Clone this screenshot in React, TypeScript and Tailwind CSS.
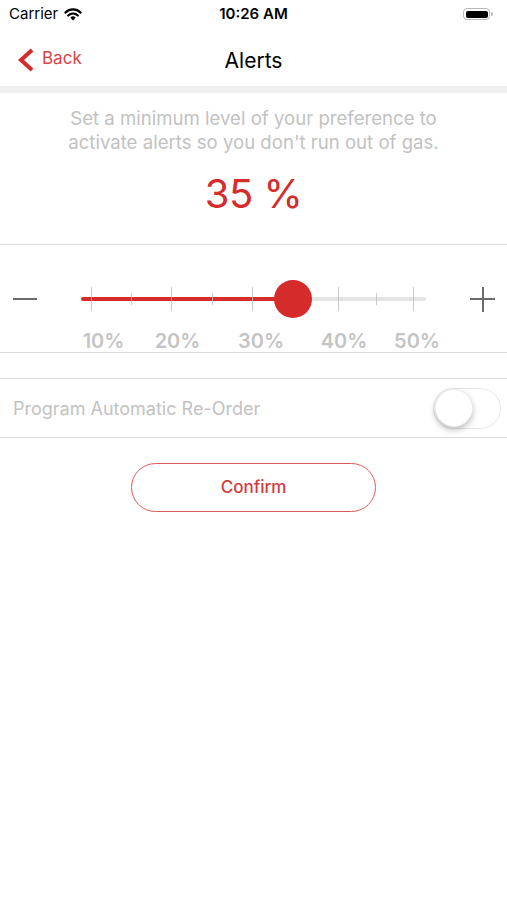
import React from "react";

export default function App() {
  const majorTicks = [9.7, 89.7, 170.7, 257, 332];
  const minorTicks = [50, 130.7, 294.7];
  return (
    <div
      className="w-[507px] h-[900px] bg-white flex flex-col"
      style={{ fontFamily: "Inter, 'Noto Sans', sans-serif" }}
    >
      {/* Status bar */}
      <div className="h-[28px] grid grid-cols-3 items-center px-[9px]">
        <div className="flex items-center gap-[6px] text-[15px] text-black">
          <span>Carrier</span>
          <svg width="18" height="13" viewBox="0 0 18 13">
            <path d="M9 12.5 L6.3 9.6 A4 4 0 0 1 11.7 9.6 Z" fill="#000" />
            <path d="M4.2 7.5 A6.8 6.8 0 0 1 13.8 7.5" stroke="#000" strokeWidth="2.2" fill="none" strokeLinecap="round" />
            <path d="M1.4 4.6 A10.8 10.8 0 0 1 16.6 4.6" stroke="#000" strokeWidth="2.2" fill="none" strokeLinecap="round" />
          </svg>
        </div>
        <div className="text-center text-[15px] font-semibold text-black">10:26 AM</div>
        <div className="flex justify-end items-center pr-[5px]">
          <div className="w-[27px] h-[12px] rounded-[4px] border border-[#b8b8b8] p-[1.5px]">
            <div className="w-full h-full bg-black rounded-[2px]" />
          </div>
          <div className="w-[2px] h-[4px] bg-[#b8b8b8] rounded-r-sm ml-[1px]" />
        </div>
      </div>

      {/* Nav bar */}
      <div className="h-[58px] relative flex items-center justify-center pt-[7px]">
        <div className="absolute left-[17px] top-[18px] flex items-center gap-[6px]">
          <svg width="19" height="24" viewBox="0 0 19 24">
            <path d="M15 2 L4 12 L15 22" stroke="#d62b2b" strokeWidth="4" fill="none" strokeLinejoin="miter" />
          </svg>
          <span className="text-[17px] text-[#d94545] pb-[2px]">Back</span>
        </div>
        <span className="text-[21px] text-black">Alerts</span>
      </div>
      <div className="h-[7px] bg-[#efefef]" />

      {/* Description */}
      <div className="flex flex-col items-center pt-[13px] pb-[26px] border-b border-[#dcdcdc]">
        <p className="text-[18.6px] leading-[24px] text-[#c2c2c2] text-center">
          Set a minimum level of your preference to
          <br />
          activate alerts so you don't run out of gas.
        </p>
        <div className="mt-[16px] text-[40px] leading-[48px] text-[#d62b2b] tracking-[-0.5px]">35 %</div>
      </div>

      {/* Slider */}
      <div className="pt-[33px] border-b border-[#dcdcdc]">
        <div className="flex items-center h-[42px]">
          <div className="ml-[13px] w-[24px] h-[2px] bg-[#6b6b6b]" />
          <div className="ml-[44px] w-[345px] h-[42px] flex items-center">
            <div className="relative w-full h-[4px] rounded-full bg-[#e4e4e4]">
              <div className="absolute left-0 top-0 h-[4px] w-[212px] rounded-full bg-[#d62b2b]" />
              {majorTicks.map((x) => (
                <div
                  key={x}
                  className="absolute top-[-10px] h-[24px] w-px bg-[#bdbdbd]/80"
                  style={{ left: x }}
                />
              ))}
              {minorTicks.map((x) => (
                <div
                  key={x}
                  className="absolute top-[-4px] h-[12px] w-px bg-[#bdbdbd]/80"
                  style={{ left: x }}
                />
              ))}
              <div className="absolute left-[193px] top-[-17px] w-[38px] h-[38px] rounded-full bg-[#d62b2b]" />
            </div>
          </div>
          <div className="ml-[44px] w-[25px] h-[25px] relative flex items-center justify-center">
            <div className="w-[25px] h-[2px] bg-[#6b6b6b]" />
            <div className="absolute w-[2px] h-[25px] bg-[#6b6b6b]" />
          </div>
        </div>
        <div className="flex mt-[10px] h-[22px] items-center text-[20px] font-semibold text-[#c4c4c4]">
          <div className="ml-[73.5px] w-[60px] text-center">10%</div>
          <div className="ml-[14px] w-[60px] text-center">20%</div>
          <div className="ml-[23.5px] w-[60px] text-center">30%</div>
          <div className="ml-[23px] w-[60px] text-center">40%</div>
          <div className="ml-[13px] w-[60px] text-center">50%</div>
        </div>
      </div>

      {/* Toggle row */}
      <div className="mt-[25px] h-[60px] border-y border-[#dcdcdc] flex items-center justify-between pl-[13px] pr-[6px]">
        <span className="text-[18px] text-[#c2c2c2] pt-[1px]">Program Automatic Re-Order</span>
        <div className="w-[68px] h-[41px] rounded-full border border-[#e6e6e6] bg-white flex items-center p-[1px]">
          <div className="w-[38px] h-[38px] rounded-full bg-white shadow-[0_3px_6px_rgba(0,0,0,0.25)] border border-[#ececec]" />
        </div>
      </div>

      {/* Confirm */}
      <div className="flex justify-center mt-[25px]">
        <button className="w-[245px] h-[49px] rounded-full border-[1.5px] border-[#de5a5a] text-[17px] font-medium text-[#d33a3a] bg-white">
          Confirm
        </button>
      </div>
    </div>
  );
}
